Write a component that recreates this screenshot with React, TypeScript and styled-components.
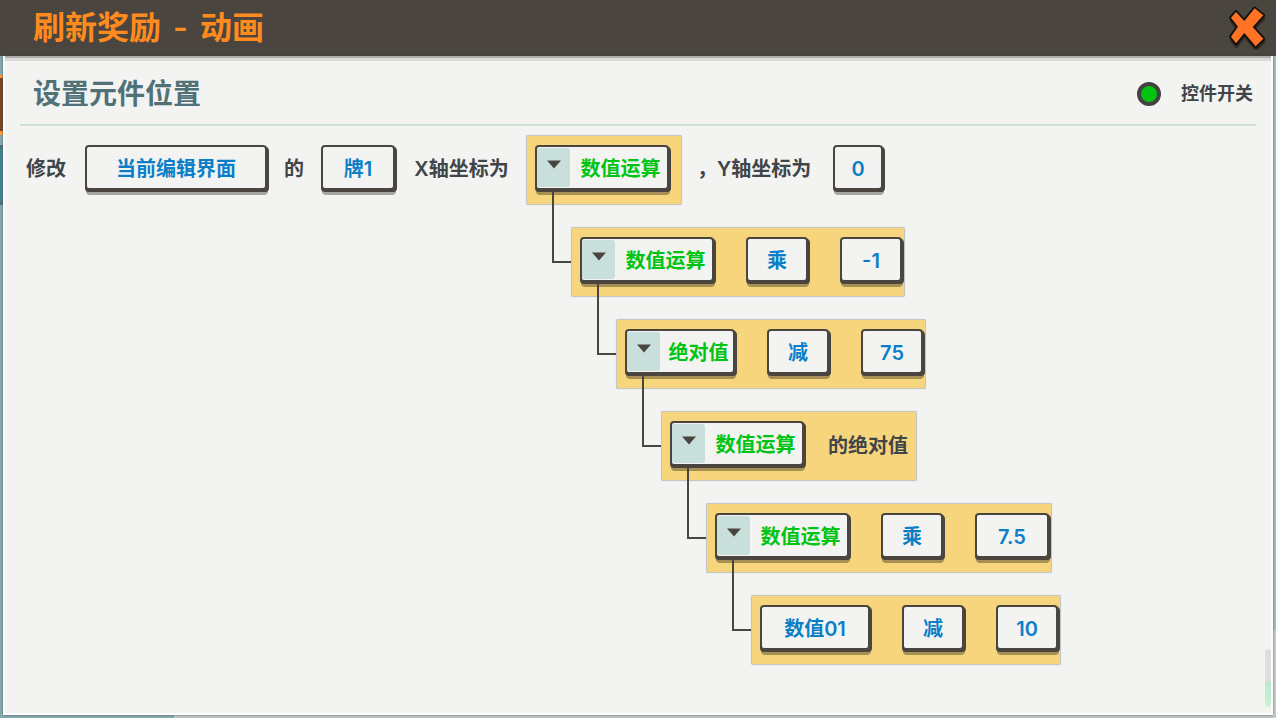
import React from 'react';
import styled, { createGlobalStyle } from 'styled-components';

const ink = '#4a463f';
const paper = '#f3f3f1';

const GlobalStyle = createGlobalStyle`
  *, *::before, *::after { box-sizing: border-box; }
  body {
    margin: 0;
    overflow: hidden;
    font-family: Inter, "Noto Sans CJK SC", sans-serif;
    font-weight: 600;
    color: #3f4548;
  }
  button, input { font: inherit; }
`;

const Page = styled.div`
  display: flex;
  flex-direction: column;
  min-height: 100vh;
`;

const Header = styled.header`
  display: flex;
  align-items: center;
  justify-content: space-between;
  height: 56px;
  padding: 0 6px 0 33px;
  background: ${ink};
`;

const Title = styled.h1`
  display: flex;
  gap: 12px;
  margin: 0;
  font-size: 32px;
  line-height: 44px;
  font-weight: 600;
  color: #ff8a1e;
`;

const CloseButton = styled.button`
  display: flex;
  padding: 0 0 4px;
  border: 0;
  background: none;
  cursor: pointer;
`;

/* The game scene stays visible as a thin frame round the sheet. */
const Scene = styled.div`
  display: flex;
  flex: 1;
  padding: 0 3px 3px;
  background:
    linear-gradient(#a2c0b1 0 574px, #c3cbc6 574px) right top / 3px 100% no-repeat,
    linear-gradient(90deg, #86a9ab 0 174px, #bfc5bf 174px) left bottom / 100% 3px no-repeat,
    linear-gradient(
      #86a9ab 0 19px, #ff9a3c 19px 22px, #7c4529 22px 75px, #ff9a3c 75px 79px,
      #86a9ab 79px 89px, #4e7680 89px 93px, #468392 93px 145px, #4e7680 145px 149px, #86a9ab 149px
    ) left top / 3px 100% no-repeat;
`;

const Sheet = styled.main`
  position: relative;
  flex: 1;
  min-width: 0;
  padding: 5px 15px 0;
  border: solid #fdfdfd;
  border-width: 0 2px 2px;
  background: linear-gradient(#adadab 0 2px, #d9d9d7 2px 5px, ${paper} 5px);
  box-shadow: 0 0 2px rgba(40, 60, 60, 0.7);
`;

const SheetHead = styled.div`
  display: flex;
  align-items: center;
  justify-content: space-between;
  height: 65px;
  padding: 2px 3px 0 13px;
  border-bottom: 2px solid #cfe0d4;
`;

const Heading = styled.h2`
  margin: 0;
  font-size: 28px;
  line-height: 40px;
  font-weight: 600;
  color: #4f7177;
`;

const Switch = styled.label`
  display: flex;
  align-items: center;
  gap: 20px;
  font-size: 18px;
  line-height: 24px;
`;

const SwitchDot = styled.input`
  appearance: none;
  width: 24px;
  height: 24px;
  margin: 0;
  border: 4px solid #454142;
  border-radius: 50%;
  background: #8a8a88;
  &:checked { background: #00c40f; }
`;

const Sentence = styled.div`
  display: flex;
  align-items: flex-start;
  gap: 15px;
  padding: 9px 4px 0 6px;
`;

const Label = styled.span<{ $units: number; $center?: boolean }>`
  flex: none;
  width: ${p => p.$units * 11}px;
  text-align: ${p => (p.$center ? 'center' : 'left')};
  font-size: 20px;
  line-height: 68px;
  white-space: nowrap;
`;

const Chip = styled.button<{ $units: number }>`
  display: flex;
  align-items: center;
  justify-content: center;
  flex: none;
  width: ${p => p.$units * 12 + 38}px;
  height: 45px;
  margin: 10px 2px 0 0;
  padding: 2px 0 0;
  border: 2px solid ${ink};
  border-radius: 4px;
  background: ${paper};
  box-shadow: 1px 1px 0 ${ink}, 2px 2px 0 ${ink}, 0 2px 0 ${ink}, 1px 5px 0 rgba(0, 0, 0, 0.32);
  font-size: 20px;
  line-height: 28px;
  color: #0a7fc8;
  white-space: nowrap;
  cursor: pointer;
`;

const FoldChip = styled(Chip)`
  justify-content: flex-start;
  padding: 0;
  color: #00c414;
`;

const FoldMark = styled.span`
  display: flex;
  justify-content: center;
  flex: none;
  width: 33px;
  height: 39px;
  padding-top: 12px;
  border-radius: 3px;
  background: #c8dfdc;
`;

const FoldText = styled.span`
  flex: 1;
  padding: 2px 0 0 4px;
`;

const Panel = styled.div<{ $single?: boolean }>`
  display: flex;
  gap: 22px;
  width: max-content;
  height: 70px;
  padding: 0 ${p => (p.$single ? 10 : 0)}px 0 0;
  border: 1px solid #c3c5c6;
  border-radius: 2px;
  background: #f6d57d;
  box-shadow: 0 0 1px #c3c5c6;

  ${Chip} { margin: 9px 2px 0 8px; }
`;

/* Takes no width of its own, so a deep tree never pushes the sentence apart. */
const Children = styled.div`
  position: relative;
  width: 0;
  margin-left: 45px;
  padding-top: 22px;

  &::before {
    content: '';
    position: absolute;
    left: -19px;
    top: -13px;
    width: 19px;
    height: 71px;
    border: solid ${ink};
    border-width: 0 0 2px 2px;
  }
`;

const Branch = styled.div`
  flex: none;
`;

const ScrollThumb = styled.div`
  position: absolute;
  right: 0;
  bottom: 6px;
  width: 6px;
  height: 58px;
  border-radius: 3px;
  background: linear-gradient(#dededd 0 33px, #b9ead0 33px, #c9f3d3);
`;

type Part = { text: string; label?: boolean };
type Node = { fold?: string; parts: Part[]; child?: Node };

const expression: Node = {
  fold: '数值运算',
  parts: [],
  child: {
    fold: '数值运算',
    parts: [{ text: '乘' }, { text: '-1' }],
    child: {
      fold: '绝对值',
      parts: [{ text: '减' }, { text: '75' }],
      child: {
        fold: '数值运算',
        parts: [{ text: '的绝对值', label: true }],
        child: {
          fold: '数值运算',
          parts: [{ text: '乘' }, { text: '7.5' }],
          child: { parts: [{ text: '数值01' }, { text: '减' }, { text: '10' }] },
        },
      },
    },
  },
};

/* A Han character or full-width mark counts two units, a Latin one counts one. */
const unitsOf = (text: string) =>
  Array.from(text).reduce((sum, ch) => sum + (ch.charCodeAt(0) > 255 ? 2 : 1), 0);

const Value = ({ text }: { text: string }) => (
  <Chip type="button" $units={unitsOf(text)}>{text}</Chip>
);

const Words = ({ text, center }: { text: string; center?: boolean }) => (
  <Label $units={unitsOf(text)} $center={center}>{text}</Label>
);

const Fold = ({ text }: { text: string }) => (
  <FoldChip type="button" aria-expanded="true" $units={unitsOf(text)}>
    <FoldMark>
      <svg width="14" height="9" viewBox="0 0 14 9" aria-hidden="true">
        <path d="M0 0.5H14L7 8.5Z" fill={ink} />
      </svg>
    </FoldMark>
    <FoldText>{text}</FoldText>
  </FoldChip>
);

const Tree = ({ node }: { node: Node }) => (
  <Branch>
    <Panel $single={node.parts.length === 0}>
      {node.fold && <Fold text={node.fold} />}
      {node.parts.map((part, i) =>
        part.label ? <Words key={i} text={part.text} /> : <Value key={i} text={part.text} />
      )}
    </Panel>
    {node.child && (
      <Children>
        <Tree node={node.child} />
      </Children>
    )}
  </Branch>
);

const crossPath =
  'M378 35L403 62L434 24L460 45L428 80L460 115L437 138L403 98L378 129L363 109L384 79L363 52Z';

const CloseIcon = () => (
  <svg width="45" height="48" viewBox="345 5 135 144" aria-hidden="true">
    <path
      d={crossPath}
      transform="translate(1 9)"
      fill="#2f2c27"
      stroke="#2f2c27"
      strokeWidth="10"
      strokeLinejoin="round"
    />
    <path d={crossPath} stroke="#14110d" strokeWidth="11" strokeLinejoin="round" />
    <path d={crossPath} fill="#ff7326" />
  </svg>
);

export default function App() {
  return (
    <Page>
      <GlobalStyle />
      <Header>
        <Title>
          <span>刷新奖励</span> <span>-</span> <span>动画</span>
        </Title>
        <CloseButton type="button" aria-label="关闭">
          <CloseIcon />
        </CloseButton>
      </Header>
      <Scene>
        <Sheet>
          <SheetHead>
            <Heading>设置元件位置</Heading>
            <Switch>
              <SwitchDot type="checkbox" defaultChecked />
              控件开关
            </Switch>
          </SheetHead>
          <Sentence>
            <Words text="修改" />
            <Value text="当前编辑界面" />
            <Words text="的" />
            <Value text="牌1" />
            <Words text="X轴坐标为" center />
            <Tree node={expression} />
            <Words text="，Y轴坐标为" />
            <Value text="0" />
          </Sentence>
          <ScrollThumb />
        </Sheet>
      </Scene>
    </Page>
  );
}
